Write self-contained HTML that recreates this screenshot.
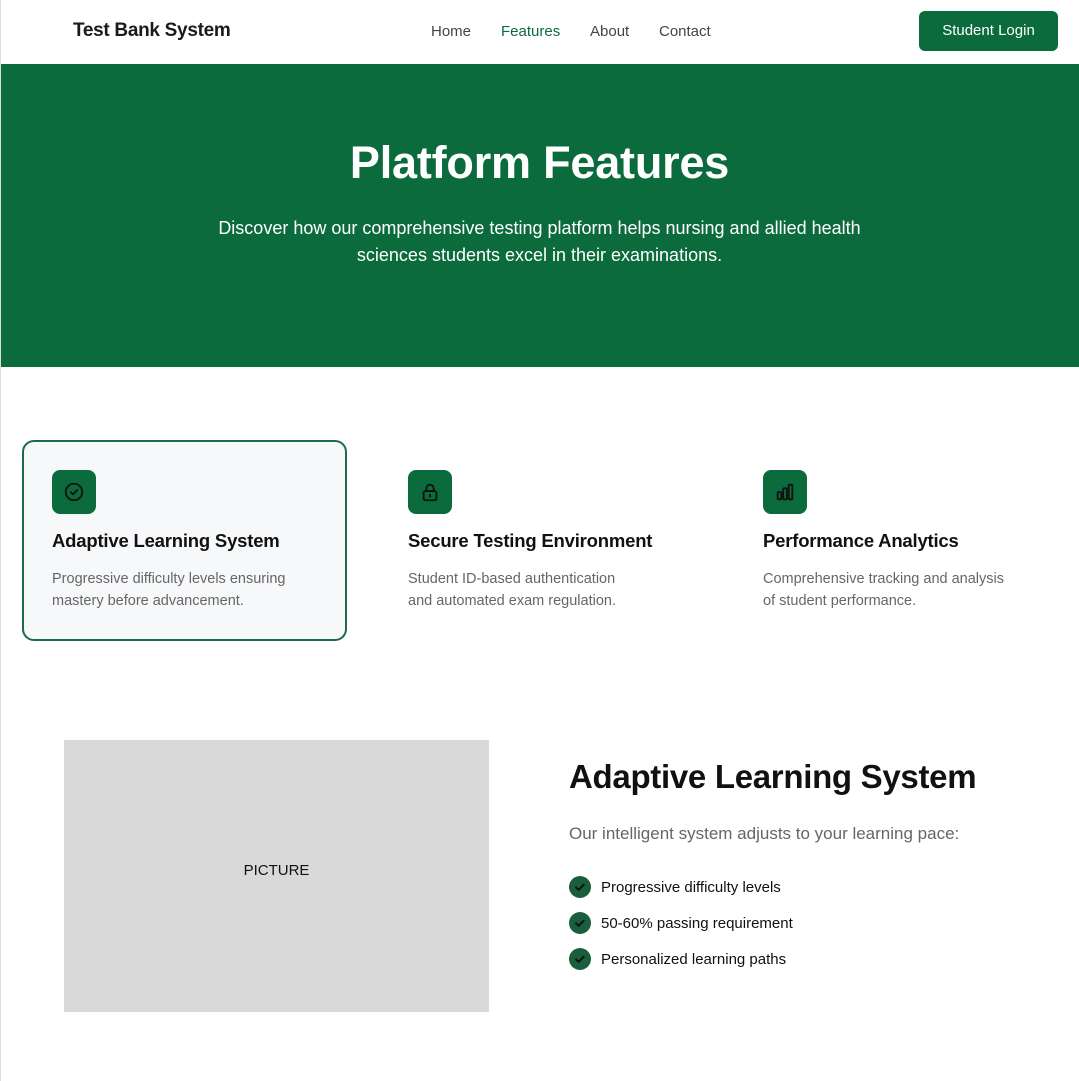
<!DOCTYPE html>
<html><head><meta charset="utf-8"><style>
*{margin:0;padding:0;box-sizing:border-box}
body{width:1079px;height:1081px;overflow:hidden;background:#fff;font-family:"Liberation Sans",sans-serif;color:#111;position:relative}
.bl{position:absolute;left:0;top:0;width:1px;height:1081px;background:#ddd;z-index:5}
.nav{height:64px;position:relative}
.logo{position:absolute;left:73px;top:20px;font-size:19px;font-weight:600;color:#1a1a1a;letter-spacing:-0.3px}
.links{position:absolute;top:23px;left:431px;font-size:15px;color:#444}
.links span{position:absolute;white-space:nowrap}
.links .act{color:#0b6b3c}
.btn{position:absolute;left:919px;top:11px;width:139px;height:40px;background:#0b6b3c;color:#fff;border-radius:6px;font-size:15px;text-align:center;line-height:40px}
.hero{position:absolute;top:64px;left:0;width:1079px;height:303px;background:#0b6b3c;color:#fff;text-align:center}
.hero h1{font-size:45px;font-weight:700;margin-top:73px;letter-spacing:-0.2px}
.hero p{font-size:18px;line-height:27px;margin:26px auto 0;width:705px}
.card{position:absolute;top:440px;width:325px;height:201px;padding:30px}
.card.sel{border:2px solid #1e6b45;border-radius:12px;background:#f7f8fa;padding:28px}
.ic{width:44px;height:44px;background:#0b6b3c;border-radius:8px;display:flex;align-items:center;justify-content:center}
.card h3{font-size:18.5px;font-weight:600;margin-top:16px;letter-spacing:-0.2px}
.card p{font-size:14.5px;color:#666;line-height:21.5px;margin-top:17px}
.pic{position:absolute;left:64px;top:740px;width:425px;height:272px;background:#d9d9d9;text-align:center;line-height:262px;font-size:15px;color:#111}
.h2{position:absolute;left:569px;top:758px;font-size:33px;font-weight:700;letter-spacing:-0.3px}
.sub{position:absolute;left:569px;top:824px;font-size:17px;color:#666}
.li{position:absolute;left:569px;font-size:15px;display:flex;align-items:center}
.li svg{margin-right:10px}
</style></head><body>
<div class="bl"></div>
<div class="nav"><div class="logo">Test Bank System</div>
<div class="links"><span style="left:0">Home</span><span class="act" style="left:70px">Features</span><span style="left:159px">About</span><span style="left:228px">Contact</span></div>
<div class="btn">Student Login</div></div>
<div class="hero"><h1>Platform Features</h1><p>Discover how our comprehensive testing platform helps nursing and allied health sciences students excel in their examinations.</p></div>

<div class="card sel" style="left:22px"><div class="ic"><svg width="22" height="22" viewBox="0 0 24 24" fill="none" stroke="#111" stroke-width="2" stroke-linecap="round" stroke-linejoin="round"><circle cx="12" cy="12" r="9"/><path d="M8.5 12.2l2.4 2.4 4.6-4.8"/></svg></div><h3>Adaptive Learning System</h3><p>Progressive difficulty levels ensuring mastery before advancement.</p></div>
<div class="card" style="left:378px"><div class="ic"><svg width="22" height="22" viewBox="0 0 24 24" fill="none" stroke="#111" stroke-width="2" stroke-linecap="round" stroke-linejoin="round"><rect x="5" y="11" width="14" height="10" rx="2"/><path d="M8 11V8a4 4 0 0 1 8 0v3M12 15v2"/></svg></div><h3>Secure Testing Environment</h3><p>Student ID-based authentication<br>and automated exam regulation.</p></div>
<div class="card" style="left:733px"><div class="ic"><svg width="22" height="22" viewBox="0 0 24 24" fill="none" stroke="#111" stroke-width="2" stroke-linejoin="round"><rect x="4" y="12" width="4" height="8" rx="1"/><rect x="10" y="8" width="4" height="12" rx="1"/><rect x="16" y="4" width="4" height="16" rx="1"/></svg></div><h3>Performance Analytics</h3><p>Comprehensive tracking and analysis<br>of student performance.</p></div>

<div class="pic">PICTURE</div>
<div class="h2">Adaptive Learning System</div>
<div class="sub">Our intelligent system adjusts to your learning pace:</div>
<div class="li" style="top:876px"><svg width="22" height="22" viewBox="0 0 22 22"><circle cx="11" cy="11" r="11" fill="#1b5e3c"/><path d="M7 11.3l2.6 2.5 5-5" fill="none" stroke="#111" stroke-width="2" stroke-linecap="round" stroke-linejoin="round"/></svg>Progressive difficulty levels</div>
<div class="li" style="top:912px"><svg width="22" height="22" viewBox="0 0 22 22"><circle cx="11" cy="11" r="11" fill="#1b5e3c"/><path d="M7 11.3l2.6 2.5 5-5" fill="none" stroke="#111" stroke-width="2" stroke-linecap="round" stroke-linejoin="round"/></svg>50-60% passing requirement</div>
<div class="li" style="top:948px"><svg width="22" height="22" viewBox="0 0 22 22"><circle cx="11" cy="11" r="11" fill="#1b5e3c"/><path d="M7 11.3l2.6 2.5 5-5" fill="none" stroke="#111" stroke-width="2" stroke-linecap="round" stroke-linejoin="round"/></svg>Personalized learning paths</div>
</body></html>
